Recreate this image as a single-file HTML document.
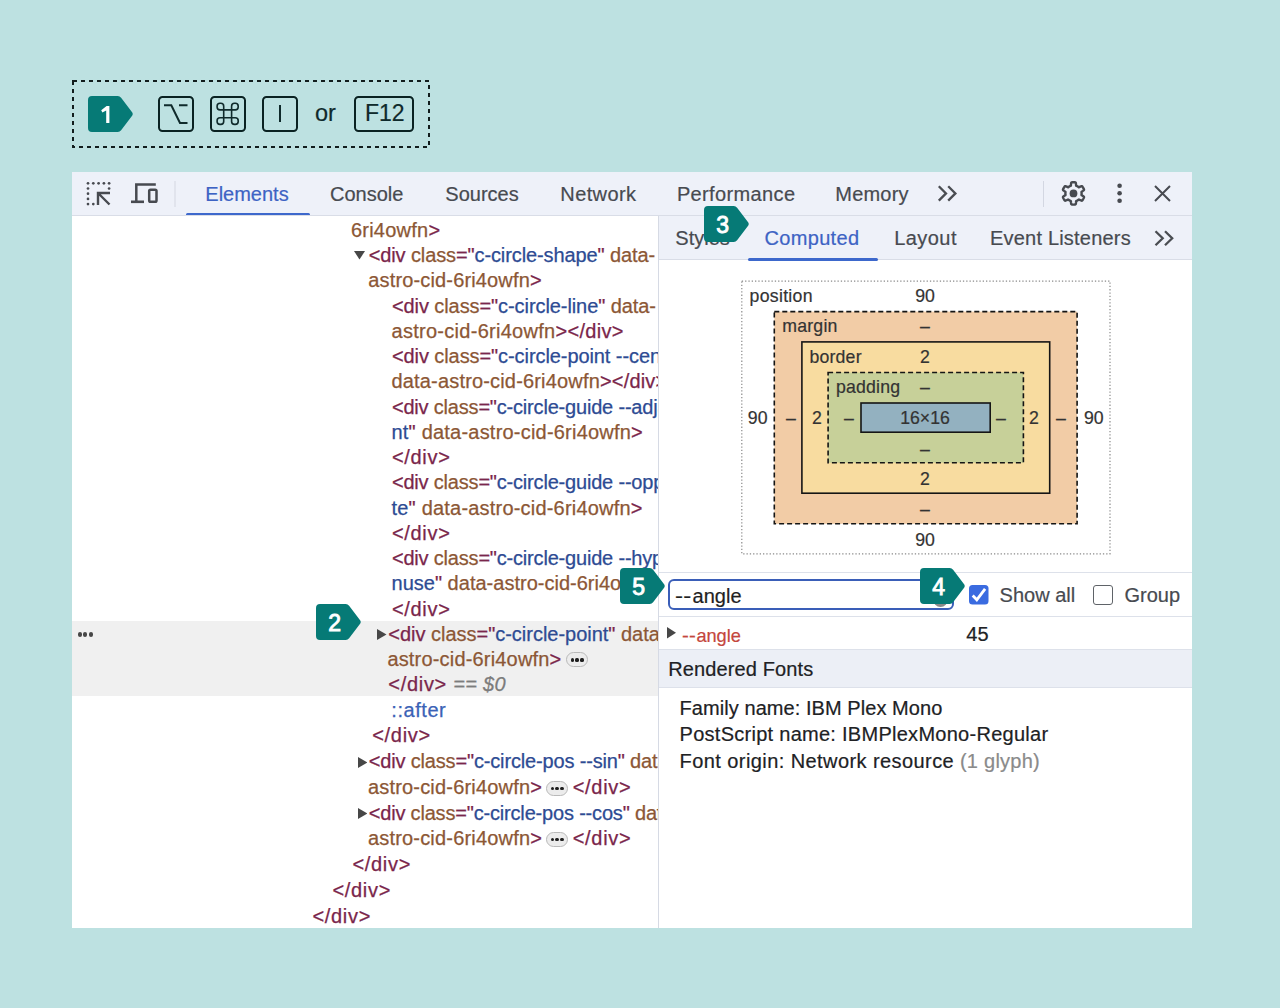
<!DOCTYPE html><html><head><meta charset="utf-8"><style>
*{margin:0;padding:0;box-sizing:border-box}
html,body{width:1280px;height:1008px;overflow:hidden;background:#bde1e1;font-family:'Liberation Sans', sans-serif}
.t{position:absolute;white-space:pre;line-height:30px;font-family:'Liberation Sans', sans-serif;-webkit-text-stroke:0.2px currentColor}
.abs{position:absolute}
.key{position:absolute;top:96px;height:36px;border:2px solid #0a2222;border-radius:4.5px}
.tab{color:#474a50}
.dom{position:absolute;left:72px;top:216px;width:586px;height:712px;overflow:hidden;background:#fff}
.dom .t{font-size:20px;-webkit-text-stroke:0.25px currentColor}
.tag{color:#7a264b} .att{color:#8c5735} .val{color:#2d4b93}
.btn{position:absolute;width:22px;height:15px;border:1px solid #b9b9b9;border-radius:8px;background:#ececec}
.btn i{position:absolute;top:5.1px;width:3.2px;height:3.2px;border-radius:50%;background:#1e1e1e}
</style></head><body>
<svg class="abs" style="left:0;top:0" width="1280" height="160"><rect x="73" y="81" width="356" height="66" fill="none" stroke="#111d1d" stroke-width="2" stroke-dasharray="4 4"/></svg>
<svg class="abs" style="left:88px;top:96px" width="46" height="36"><path d="M4,0 H29.8 Q31.8,0 33.1,1.8 L44.3,16.4 Q45.3,18 44.3,19.6 L33.1,34.2 Q31.8,36 29.8,36 H4 Q0,36 0,32 V4 Q0,0 4,0 Z" fill="#067a76"/><path d="M21.4,10 V27 H18.2 V14.4 L14.4,16.6 L13.2,14.3 L18.6,10 Z" fill="#fff"/></svg>
<div class="key" style="left:158px;width:36px"></div><svg class="abs" style="left:158px;top:96px" width="36" height="36"><path d="M6,9.2 H13.3 L22,26.9 H29.5 M21,9.2 H29.5" fill="none" stroke="#0f2a2b" stroke-width="2"/></svg>
<div class="key" style="left:210px;width:36px"></div><svg class="abs" style="left:210px;top:96px" width="36" height="36"><path d="M13.7,13.9 H21.6 V21.8 H13.7 Z M13.70,13.90 L10.00,13.90 Q7.10,13.90 7.10,11.00 L7.10,10.20 Q7.10,7.30 10.00,7.30 L10.80,7.30 Q13.70,7.30 13.70,10.20 L13.70,13.90 M21.60,13.90 L25.30,13.90 Q28.20,13.90 28.20,11.00 L28.20,10.20 Q28.20,7.30 25.30,7.30 L24.50,7.30 Q21.60,7.30 21.60,10.20 L21.60,13.90 M13.70,21.80 L10.00,21.80 Q7.10,21.80 7.10,24.70 L7.10,25.50 Q7.10,28.40 10.00,28.40 L10.80,28.40 Q13.70,28.40 13.70,25.50 L13.70,21.80 M21.60,21.80 L25.30,21.80 Q28.20,21.80 28.20,24.70 L28.20,25.50 Q28.20,28.40 25.30,28.40 L24.50,28.40 Q21.60,28.40 21.60,25.50 L21.60,21.80 " fill="none" stroke="#0f2a2b" stroke-width="1.6"/></svg>
<div class="key" style="left:262px;width:36px"></div><div class="abs" style="left:279px;top:105px;width:2.4px;height:17px;background:#0f2a2b"></div>
<div class="t " style="left:315px;top:98.00px;font-size:23.5px;color:#0f2a2b;">or</div>
<div class="key" style="left:354px;width:60px"></div><div class="t " style="left:365px;top:98.00px;font-size:23px;color:#0f2a2b;">F12</div>
<div class="abs" style="left:72px;top:172px;width:1120px;height:756px;background:#fff"></div>
<div class="abs" style="left:72px;top:172px;width:1120px;height:44px;background:#eef1f9;border-bottom:1px solid #d9dde7"></div>
<svg class="abs" style="left:0;top:0" width="1280" height="215"><circle cx="88" cy="183.3" r="1.35" fill="#474a50"/><circle cx="93.3" cy="183.3" r="1.35" fill="#474a50"/><circle cx="98.6" cy="183.3" r="1.35" fill="#474a50"/><circle cx="103.9" cy="183.3" r="1.35" fill="#474a50"/><circle cx="109.1" cy="183.3" r="1.35" fill="#474a50"/><circle cx="88" cy="188.5" r="1.35" fill="#474a50"/><circle cx="88" cy="193.7" r="1.35" fill="#474a50"/><circle cx="88" cy="198.9" r="1.35" fill="#474a50"/><circle cx="88" cy="204.1" r="1.35" fill="#474a50"/><circle cx="93.3" cy="204.1" r="1.35" fill="#474a50"/><circle cx="109.1" cy="188.5" r="1.35" fill="#474a50"/><path d="M98,205 V193 H110 M98,193 L109.5,204.5" fill="none" stroke="#474a50" stroke-width="2.4"/><path d="M136.3,203 V184.6 H155.8" fill="none" stroke="#474a50" stroke-width="2.5"/><rect x="131" y="200.5" width="13" height="2.6" fill="#474a50"/><rect x="149.2" y="189.8" width="7.3" height="11.9" rx="1.3" fill="none" stroke="#474a50" stroke-width="2.5"/><rect x="174.5" y="181" width="1" height="26" fill="#d3d7e2"/><rect x="1043" y="181" width="1" height="26" fill="#d3d7e2"/><rect x="186" y="213" width="124" height="3" rx="1.5" fill="#3d68cc"/><path d="M938.8,186.2 L946,193.4 L938.8,200.6 M948.2,186.2 L955.4,193.4 L948.2,200.6" fill="none" stroke="#4a4d52" stroke-width="2.3"/><circle cx="1119.6" cy="185.8" r="2.3" fill="#474a50"/><circle cx="1119.6" cy="193.3" r="2.3" fill="#474a50"/><circle cx="1119.6" cy="200.8" r="2.3" fill="#474a50"/><path d="M1155,186 L1170,201 M1170,186 L1155,201" fill="none" stroke="#474a50" stroke-width="2"/></svg>
<svg class="abs" style="left:0;top:0" width="1280" height="215"><path d="M1073.50,182.20 L1073.79,182.20 L1074.09,182.22 L1074.38,182.23 L1074.67,182.26 L1074.96,182.30 L1075.25,182.34 L1075.54,182.39 L1075.77,182.70 L1075.90,183.39 L1076.00,184.08 L1076.06,184.77 L1076.08,185.45 L1076.20,185.76 L1076.40,185.84 L1076.60,185.92 L1076.79,186.00 L1076.99,186.09 L1077.18,186.18 L1077.36,186.28 L1077.55,186.39 L1077.73,186.49 L1077.91,186.61 L1078.09,186.72 L1078.26,186.85 L1078.43,186.97 L1078.60,187.11 L1078.76,187.24 L1079.09,187.19 L1079.70,186.87 L1080.32,186.58 L1080.97,186.31 L1081.63,186.08 L1082.02,186.13 L1082.20,186.35 L1082.39,186.58 L1082.56,186.82 L1082.73,187.06 L1082.89,187.30 L1083.05,187.55 L1083.20,187.80 L1083.34,188.06 L1083.48,188.32 L1083.61,188.58 L1083.73,188.84 L1083.85,189.11 L1083.96,189.39 L1084.06,189.66 L1083.91,190.02 L1083.37,190.48 L1082.82,190.90 L1082.26,191.30 L1081.68,191.66 L1081.46,191.92 L1081.50,192.13 L1081.53,192.34 L1081.56,192.55 L1081.58,192.76 L1081.59,192.98 L1081.60,193.19 L1081.60,193.40 L1081.60,193.61 L1081.59,193.82 L1081.58,194.04 L1081.56,194.25 L1081.53,194.46 L1081.50,194.67 L1081.46,194.88 L1081.68,195.14 L1082.26,195.50 L1082.82,195.90 L1083.37,196.32 L1083.91,196.78 L1084.06,197.14 L1083.96,197.41 L1083.85,197.69 L1083.73,197.96 L1083.61,198.22 L1083.48,198.48 L1083.34,198.74 L1083.20,199.00 L1083.05,199.25 L1082.89,199.50 L1082.73,199.74 L1082.56,199.98 L1082.39,200.22 L1082.20,200.45 L1082.02,200.67 L1081.63,200.72 L1080.97,200.49 L1080.32,200.22 L1079.70,199.93 L1079.09,199.61 L1078.76,199.56 L1078.60,199.69 L1078.43,199.83 L1078.26,199.95 L1078.09,200.08 L1077.91,200.19 L1077.73,200.31 L1077.55,200.41 L1077.36,200.52 L1077.18,200.62 L1076.99,200.71 L1076.79,200.80 L1076.60,200.88 L1076.40,200.96 L1076.20,201.04 L1076.08,201.35 L1076.06,202.03 L1076.00,202.72 L1075.90,203.41 L1075.77,204.10 L1075.54,204.41 L1075.25,204.46 L1074.96,204.50 L1074.67,204.54 L1074.38,204.57 L1074.09,204.58 L1073.79,204.60 L1073.50,204.60 L1073.21,204.60 L1072.91,204.58 L1072.62,204.57 L1072.33,204.54 L1072.04,204.50 L1071.75,204.46 L1071.46,204.41 L1071.23,204.10 L1071.10,203.41 L1071.00,202.72 L1070.94,202.03 L1070.92,201.35 L1070.80,201.04 L1070.60,200.96 L1070.40,200.88 L1070.21,200.80 L1070.01,200.71 L1069.82,200.62 L1069.64,200.52 L1069.45,200.41 L1069.27,200.31 L1069.09,200.19 L1068.91,200.08 L1068.74,199.95 L1068.57,199.83 L1068.40,199.69 L1068.24,199.56 L1067.91,199.61 L1067.30,199.93 L1066.68,200.22 L1066.03,200.49 L1065.37,200.72 L1064.98,200.67 L1064.80,200.45 L1064.61,200.22 L1064.44,199.98 L1064.27,199.74 L1064.11,199.50 L1063.95,199.25 L1063.80,199.00 L1063.66,198.74 L1063.52,198.48 L1063.39,198.22 L1063.27,197.96 L1063.15,197.69 L1063.04,197.41 L1062.94,197.14 L1063.09,196.78 L1063.63,196.32 L1064.18,195.90 L1064.74,195.50 L1065.32,195.14 L1065.54,194.88 L1065.50,194.67 L1065.47,194.46 L1065.44,194.25 L1065.42,194.04 L1065.41,193.82 L1065.40,193.61 L1065.40,193.40 L1065.40,193.19 L1065.41,192.98 L1065.42,192.76 L1065.44,192.55 L1065.47,192.34 L1065.50,192.13 L1065.54,191.92 L1065.32,191.66 L1064.74,191.30 L1064.18,190.90 L1063.63,190.48 L1063.09,190.02 L1062.94,189.66 L1063.04,189.39 L1063.15,189.11 L1063.27,188.84 L1063.39,188.58 L1063.52,188.32 L1063.66,188.06 L1063.80,187.80 L1063.95,187.55 L1064.11,187.30 L1064.27,187.06 L1064.44,186.82 L1064.61,186.58 L1064.80,186.35 L1064.98,186.13 L1065.37,186.08 L1066.03,186.31 L1066.68,186.58 L1067.30,186.87 L1067.91,187.19 L1068.24,187.24 L1068.40,187.11 L1068.57,186.97 L1068.74,186.85 L1068.91,186.72 L1069.09,186.61 L1069.27,186.49 L1069.45,186.39 L1069.64,186.28 L1069.82,186.18 L1070.01,186.09 L1070.21,186.00 L1070.40,185.92 L1070.60,185.84 L1070.80,185.76 L1070.92,185.45 L1070.94,184.77 L1071.00,184.08 L1071.10,183.39 L1071.23,182.70 L1071.46,182.39 L1071.75,182.34 L1072.04,182.30 L1072.33,182.26 L1072.62,182.23 L1072.91,182.22 L1073.21,182.20 L1073.50,182.20 Z" fill="none" stroke="#474a50" stroke-width="2.4" stroke-linejoin="round"/><circle cx="1073.5" cy="193.4" r="3.9" fill="#474a50"/></svg>
<div class="t " style="left:205.3px;top:179.00px;font-size:20px;color:#3d63c4;">Elements</div>
<div class="t " style="left:330px;top:179.00px;font-size:20px;color:#474a50;">Console</div>
<div class="t " style="left:445.3px;top:179.00px;font-size:20px;color:#474a50;">Sources</div>
<div class="t " style="left:560.3px;top:179.00px;font-size:20px;color:#474a50;letter-spacing:0.4px">Network</div>
<div class="t " style="left:676.9px;top:179.00px;font-size:20px;color:#474a50;letter-spacing:0.37px">Performance</div>
<div class="t " style="left:835.3px;top:179.00px;font-size:20px;color:#474a50;letter-spacing:0.2px">Memory</div>
<div class="dom">
<div class="abs" style="left:0;top:404.79999999999995px;width:586px;height:75.2px;background:#f0f0f0"></div><div class="abs" style="left:5.5px;top:416.29999999999995px;width:4.3px;height:4.3px;border-radius:50%;background:#474747"></div><div class="abs" style="left:11px;top:416.29999999999995px;width:4.3px;height:4.3px;border-radius:50%;background:#474747"></div><div class="abs" style="left:16.5px;top:416.29999999999995px;width:4.3px;height:4.3px;border-radius:50%;background:#474747"></div><div class="t " style="left:278.90000000000003px;top:-1.00px;font-size:20px;color:#7a264b;letter-spacing:0.24px"><span class="att">6ri4owfn</span><span class="tag">&gt;</span></div>
<div class="t " style="left:296.7px;top:24.00px;font-size:20px;color:#7a264b;letter-spacing:-0.11px"><span class="tag">&lt;div</span><span class="att"> class</span><span class="tag">="</span><span class="val">c-circle-shape</span><span class="tag">"</span><span class="att"> data-</span></div>
<div class="t " style="left:296.3px;top:49.00px;font-size:20px;color:#7a264b;letter-spacing:0.15px"><span class="att">astro-cid-6ri4owfn</span><span class="tag">&gt;</span></div>
<div class="t " style="left:319.90000000000003px;top:75.00px;font-size:20px;color:#7a264b;letter-spacing:-0.08px"><span class="tag">&lt;div</span><span class="att"> class</span><span class="tag">="</span><span class="val">c-circle-line</span><span class="tag">"</span><span class="att"> data-</span></div>
<div class="t " style="left:319.5px;top:100.00px;font-size:20px;color:#7a264b;letter-spacing:0.28px"><span class="att">astro-cid-6ri4owfn</span><span class="tag">&gt;&lt;/div&gt;</span></div>
<div class="t " style="left:319.90000000000003px;top:125.00px;font-size:20px;color:#7a264b;letter-spacing:-0.08px"><span class="tag">&lt;div</span><span class="att"> class</span><span class="tag">="</span><span class="val">c-circle-point --center</span></div>
<div class="t " style="left:319.5px;top:150.00px;font-size:20px;color:#7a264b;letter-spacing:0.17px"><span class="att">data-astro-cid-6ri4owfn</span><span class="tag">&gt;&lt;/div&gt;</span></div>
<div class="t " style="left:319.90000000000003px;top:176.00px;font-size:20px;color:#7a264b;letter-spacing:-0.19px"><span class="tag">&lt;div</span><span class="att"> class</span><span class="tag">="</span><span class="val">c-circle-guide --adjacent</span></div>
<div class="t " style="left:319.5px;top:201.00px;font-size:20px;color:#7a264b;letter-spacing:0.21px"><span class="val">nt</span><span class="tag">"</span><span class="att"> data-astro-cid-6ri4owfn</span><span class="tag">&gt;</span></div>
<div class="t " style="left:319.90000000000003px;top:226.00px;font-size:20px;color:#7a264b;letter-spacing:0.7px"><span class="tag">&lt;/div&gt;</span></div>
<div class="t " style="left:319.90000000000003px;top:251.00px;font-size:20px;color:#7a264b;letter-spacing:-0.19px"><span class="tag">&lt;div</span><span class="att"> class</span><span class="tag">="</span><span class="val">c-circle-guide --opposite</span></div>
<div class="t " style="left:319.5px;top:277.00px;font-size:20px;color:#7a264b;letter-spacing:0.2px"><span class="val">te</span><span class="tag">"</span><span class="att"> data-astro-cid-6ri4owfn</span><span class="tag">&gt;</span></div>
<div class="t " style="left:319.90000000000003px;top:302.00px;font-size:20px;color:#7a264b;letter-spacing:0.7px"><span class="tag">&lt;/div&gt;</span></div>
<div class="t " style="left:319.90000000000003px;top:327.00px;font-size:20px;color:#7a264b;letter-spacing:-0.19px"><span class="tag">&lt;div</span><span class="att"> class</span><span class="tag">="</span><span class="val">c-circle-guide --hypotenuse</span></div>
<div class="t " style="left:319.5px;top:352.00px;font-size:20px;color:#7a264b;letter-spacing:0.01px"><span class="val">nuse</span><span class="tag">"</span><span class="att"> data-astro-cid-6ri4owfn</span><span class="tag">&gt;</span></div>
<div class="t " style="left:319.90000000000003px;top:378.00px;font-size:20px;color:#7a264b;letter-spacing:0.7px"><span class="tag">&lt;/div&gt;</span></div>
<div class="t " style="left:316.3px;top:403.00px;font-size:20px;color:#7a264b;letter-spacing:-0.02px"><span class="tag">&lt;div</span><span class="att"> class</span><span class="tag">="</span><span class="val">c-circle-point</span><span class="tag">"</span><span class="att"> data-</span></div>
<div class="t " style="left:315.40000000000003px;top:428.00px;font-size:20px;color:#7a264b;letter-spacing:0.18px"><span class="att">astro-cid-6ri4owfn</span><span class="tag">&gt;</span></div>
<div class="t " style="left:316.3px;top:453.00px;font-size:20px;color:#7a264b;letter-spacing:0.7px"><span class="tag">&lt;/div&gt;</span></div>
<div class="t " style="left:319.3px;top:479.00px;font-size:20px;color:#7a264b;letter-spacing:0.55px"><span style="color:#3a62b6">::after</span></div>
<div class="t " style="left:300.2px;top:504.00px;font-size:20px;color:#7a264b;letter-spacing:0.7px"><span class="tag">&lt;/div&gt;</span></div>
<div class="t " style="left:296.7px;top:530.00px;font-size:20px;color:#7a264b;letter-spacing:-0.16px"><span class="tag">&lt;div</span><span class="att"> class</span><span class="tag">="</span><span class="val">c-circle-pos --sin</span><span class="tag">"</span><span class="att"> data-</span></div>
<div class="t " style="left:295.90000000000003px;top:556.00px;font-size:20px;color:#7a264b;letter-spacing:0.19px"><span class="att">astro-cid-6ri4owfn</span><span class="tag">&gt;</span></div>
<div class="t " style="left:296.7px;top:582.00px;font-size:20px;color:#7a264b;letter-spacing:-0.18px"><span class="tag">&lt;div</span><span class="att"> class</span><span class="tag">="</span><span class="val">c-circle-pos --cos</span><span class="tag">"</span><span class="att"> data-</span></div>
<div class="t " style="left:295.90000000000003px;top:607.00px;font-size:20px;color:#7a264b;letter-spacing:0.19px"><span class="att">astro-cid-6ri4owfn</span><span class="tag">&gt;</span></div>
<div class="t " style="left:280.40000000000003px;top:633.00px;font-size:20px;color:#7a264b;letter-spacing:0.7px"><span class="tag">&lt;/div&gt;</span></div>
<div class="t " style="left:260.40000000000003px;top:659.00px;font-size:20px;color:#7a264b;letter-spacing:0.7px"><span class="tag">&lt;/div&gt;</span></div>
<div class="t " style="left:240.40000000000003px;top:685.00px;font-size:20px;color:#7a264b;letter-spacing:0.7px"><span class="tag">&lt;/div&gt;</span></div>
<div class="t " style="left:381.2px;top:453.00px;font-size:20px;color:#7c7c7c;letter-spacing:0.3px"><span style="color:#7c7c7c;font-style:italic">== $0</span></div>
<div class="t " style="left:500.7px;top:556.00px;font-size:20px;color:#7a264b;letter-spacing:0.7px"><span class="tag">&lt;/div&gt;</span></div>
<div class="t " style="left:500.7px;top:607.00px;font-size:20px;color:#7a264b;letter-spacing:0.7px"><span class="tag">&lt;/div&gt;</span></div>
<div class="btn" style="left:494.20000000000005px;top:436.4px"><i style="left:3.6px"></i><i style="left:8.3px"></i><i style="left:13.2px"></i></div><div class="btn" style="left:474.20000000000005px;top:565.2px"><i style="left:3.6px"></i><i style="left:8.3px"></i><i style="left:13.2px"></i></div><div class="btn" style="left:474.20000000000005px;top:615.6px"><i style="left:3.6px"></i><i style="left:8.3px"></i><i style="left:13.2px"></i></div><svg class="abs" style="left:282.2px;top:35px" width="11" height="8.5"><path d="M0,0 H11 L5.5,8.5 Z" fill="#474747"/></svg><svg class="abs" style="left:305.4px;top:412.5px" width="9.5" height="11"><path d="M0,0 L9.5,5.5 L0,11 Z" fill="#474747"/></svg><svg class="abs" style="left:285.8px;top:541.2px" width="9.5" height="11"><path d="M0,0 L9.5,5.5 L0,11 Z" fill="#474747"/></svg><svg class="abs" style="left:285.8px;top:592.0px" width="9.5" height="11"><path d="M0,0 L9.5,5.5 L0,11 Z" fill="#474747"/></svg></div>
<div class="abs" style="left:658px;top:216px;width:1px;height:712px;background:#d6dae4"></div>
<div class="abs" style="left:659px;top:216px;width:533px;height:44px;background:#eef1f9;border-bottom:1px solid #d9dde7"></div>
<div class="abs" style="left:748px;top:258px;width:130px;height:3px;border-radius:1.5px;background:#3d68cc"></div>
<div class="t " style="left:675.3px;top:223.00px;font-size:20px;color:#474a50;">Styles</div>
<div class="t " style="left:764.4px;top:223.00px;font-size:20px;color:#3d63c4;letter-spacing:0.35px">Computed</div>
<div class="t " style="left:894.2px;top:223.00px;font-size:20px;color:#474a50;letter-spacing:0.45px">Layout</div>
<div class="t " style="left:990px;top:223.00px;font-size:20px;color:#474a50;letter-spacing:0.2px">Event Listeners</div>
<svg class="abs" style="left:0;top:0" width="1280" height="260"><path d="M1155.5,231.2 L1162.7,238.2 L1155.5,245.2 M1165,231.2 L1172.2,238.2 L1165,245.2" fill="none" stroke="#4a4d52" stroke-width="2.3"/></svg>
<svg class="abs" style="left:0;top:0" width="1280" height="560"><rect x="741.8" y="281.1" width="368.2" height="272.8" fill="none" stroke="#8a8a8a" stroke-width="1.2" stroke-dasharray="1.3 2"/><rect x="774.3" y="311.6" width="302.8" height="212.2" fill="#f2cca6" stroke="#151515" stroke-width="1.6" stroke-dasharray="5 3"/><rect x="801.9" y="341.9" width="247.8" height="151.3" fill="#f8dca0" stroke="#151515" stroke-width="1.6"/><rect x="828.1" y="372.5" width="195.3" height="90.2" fill="#c7d099" stroke="#151515" stroke-width="1.6" stroke-dasharray="5 3"/><rect x="861" y="403" width="129.2" height="29.2" fill="#93b1c0" stroke="#151515" stroke-width="1.6"/></svg>
<div class="t " style="left:749.5px;top:281.00px;font-size:17.7px;color:#333;letter-spacing:0.3px">position</div>
<div class="t " style="left:782.3px;top:311.00px;font-size:17.7px;color:#333;letter-spacing:0.2px">margin</div>
<div class="t " style="left:809.4px;top:342.00px;font-size:17.7px;color:#333;letter-spacing:0.2px">border</div>
<div class="t " style="left:835.9px;top:372.00px;font-size:17.7px;color:#333;letter-spacing:0.2px">padding</div>
<div class="t " style="left:825px;top:281.00px;font-size:17.7px;color:#333;width:200px;text-align:center">90</div>
<div class="t " style="left:825px;top:311.00px;font-size:17.7px;color:#333;width:200px;text-align:center">–</div>
<div class="t " style="left:825px;top:342.00px;font-size:17.7px;color:#333;width:200px;text-align:center">2</div>
<div class="t " style="left:825px;top:372.00px;font-size:17.7px;color:#333;width:200px;text-align:center">–</div>
<div class="t " style="left:825px;top:403.00px;font-size:17.7px;color:#333;width:200px;text-align:center">16×16</div>
<div class="t " style="left:825px;top:434.00px;font-size:17.7px;color:#333;width:200px;text-align:center">–</div>
<div class="t " style="left:825px;top:464.00px;font-size:17.7px;color:#333;width:200px;text-align:center">2</div>
<div class="t " style="left:825px;top:494.00px;font-size:17.7px;color:#333;width:200px;text-align:center">–</div>
<div class="t " style="left:825px;top:525.00px;font-size:17.7px;color:#333;width:200px;text-align:center">90</div>
<div class="t " style="left:657.7px;top:403.00px;font-size:17.7px;color:#333;width:200px;text-align:center">90</div>
<div class="t " style="left:690.8px;top:403.00px;font-size:17.7px;color:#333;width:200px;text-align:center">–</div>
<div class="t " style="left:717px;top:403.00px;font-size:17.7px;color:#333;width:200px;text-align:center">2</div>
<div class="t " style="left:749px;top:403.00px;font-size:17.7px;color:#333;width:200px;text-align:center">–</div>
<div class="t " style="left:901px;top:403.00px;font-size:17.7px;color:#333;width:200px;text-align:center">–</div>
<div class="t " style="left:933.8px;top:403.00px;font-size:17.7px;color:#333;width:200px;text-align:center">2</div>
<div class="t " style="left:960.8px;top:403.00px;font-size:17.7px;color:#333;width:200px;text-align:center">–</div>
<div class="t " style="left:993.8px;top:403.00px;font-size:17.7px;color:#333;width:200px;text-align:center">90</div>
<div class="abs" style="left:659px;top:572px;width:533px;height:1px;background:#dde1ea"></div>
<div class="abs" style="left:659px;top:616px;width:533px;height:1px;background:#dde1ea"></div>
<div class="abs" style="left:667.5px;top:579px;width:286px;height:31px;border:2px solid #3a5eb8;border-radius:6px;background:#fff"></div>
<div class="abs" style="left:933px;top:591.5px;width:15px;height:15px;border-radius:50%;background:#8a8a8a"></div>
<div class="t " style="left:674.6px;top:581.00px;font-size:20px;color:#1f1f1f;"><span style="display:inline-block;transform:scaleX(1.2);transform-origin:0 0;width:18px;letter-spacing:0.3px">--</span>angle</div>
<svg class="abs" style="left:969px;top:585px" width="20" height="20"><rect x="0" y="0" width="19.5" height="19.5" rx="3.5" fill="#3a6be0"/><path d="M3.7,10.6 L7.8,14.8 L16.1,3.9" fill="none" stroke="#fff" stroke-width="2.8"/></svg>
<div class="t " style="left:999.6px;top:580.00px;font-size:20px;color:#474a50;">Show all</div>
<div class="abs" style="left:1093.3px;top:585px;width:19.5px;height:19.5px;border:1.8px solid #5f6368;border-radius:3px"></div>
<div class="t " style="left:1124.5px;top:580.00px;font-size:20px;color:#474a50;">Group</div>
<svg class="abs" style="left:667px;top:627px" width="10" height="12"><path d="M0,0 L9,5.8 L0,11.6 Z" fill="#474747"/></svg>
<div class="t " style="left:682.4px;top:621.00px;font-size:18.2px;color:#c4463d;"><span style="display:inline-block;transform:scaleX(1.12);transform-origin:0 0;width:14px;letter-spacing:0.2px">--</span>angle</div>
<div class="t " style="left:966.3px;top:619.00px;font-size:20px;color:#202124;">45</div>
<div class="abs" style="left:659px;top:649px;width:533px;height:39px;background:#eceff6;border-top:1px solid #dde1ea;border-bottom:1px solid #dde1ea"></div>
<div class="t " style="left:668.3px;top:654.00px;font-size:20px;color:#202124;letter-spacing:0.12px">Rendered Fonts</div>
<div class="t " style="left:679.6px;top:693.00px;font-size:20px;color:#202124;letter-spacing:0.06px">Family name: IBM Plex Mono</div>
<div class="t " style="left:679.6px;top:719.00px;font-size:20px;color:#202124;letter-spacing:0.27px">PostScript name: IBMPlexMono-Regular</div>
<div class="t " style="left:679.6px;top:746.00px;font-size:20px;color:#202124;letter-spacing:0.42px">Font origin: Network resource<span style="color:#8a8a8a;letter-spacing:0.25px"> (1 glyph)</span></div>
<svg class="abs" style="left:316px;top:604px" width="46" height="36"><path d="M4,0 H29.8 Q31.8,0 33.1,1.8 L44.3,16.4 Q45.3,18 44.3,19.6 L33.1,34.2 Q31.8,36 29.8,36 H4 Q0,36 0,32 V4 Q0,0 4,0 Z" fill="#067a76"/></svg><div class="t" style="left:327.6px;top:608px;width:14px;text-align:center;font-size:23px;color:#fff;-webkit-text-stroke:0.9px #fff">2</div>
<svg class="abs" style="left:704px;top:206px" width="46" height="36"><path d="M4,0 H29.8 Q31.8,0 33.1,1.8 L44.3,16.4 Q45.3,18 44.3,19.6 L33.1,34.2 Q31.8,36 29.8,36 H4 Q0,36 0,32 V4 Q0,0 4,0 Z" fill="#067a76"/></svg><div class="t" style="left:715.6px;top:210px;width:14px;text-align:center;font-size:23px;color:#fff;-webkit-text-stroke:0.9px #fff">3</div>
<svg class="abs" style="left:920px;top:568px" width="46" height="36"><path d="M4,0 H29.8 Q31.8,0 33.1,1.8 L44.3,16.4 Q45.3,18 44.3,19.6 L33.1,34.2 Q31.8,36 29.8,36 H4 Q0,36 0,32 V4 Q0,0 4,0 Z" fill="#067a76"/></svg><div class="t" style="left:931.6px;top:572px;width:14px;text-align:center;font-size:23px;color:#fff;-webkit-text-stroke:0.9px #fff">4</div>
<svg class="abs" style="left:620px;top:568px" width="46" height="36"><path d="M4,0 H29.8 Q31.8,0 33.1,1.8 L44.3,16.4 Q45.3,18 44.3,19.6 L33.1,34.2 Q31.8,36 29.8,36 H4 Q0,36 0,32 V4 Q0,0 4,0 Z" fill="#067a76"/></svg><div class="t" style="left:631.6px;top:572px;width:14px;text-align:center;font-size:23px;color:#fff;-webkit-text-stroke:0.9px #fff">5</div>
</body></html>
